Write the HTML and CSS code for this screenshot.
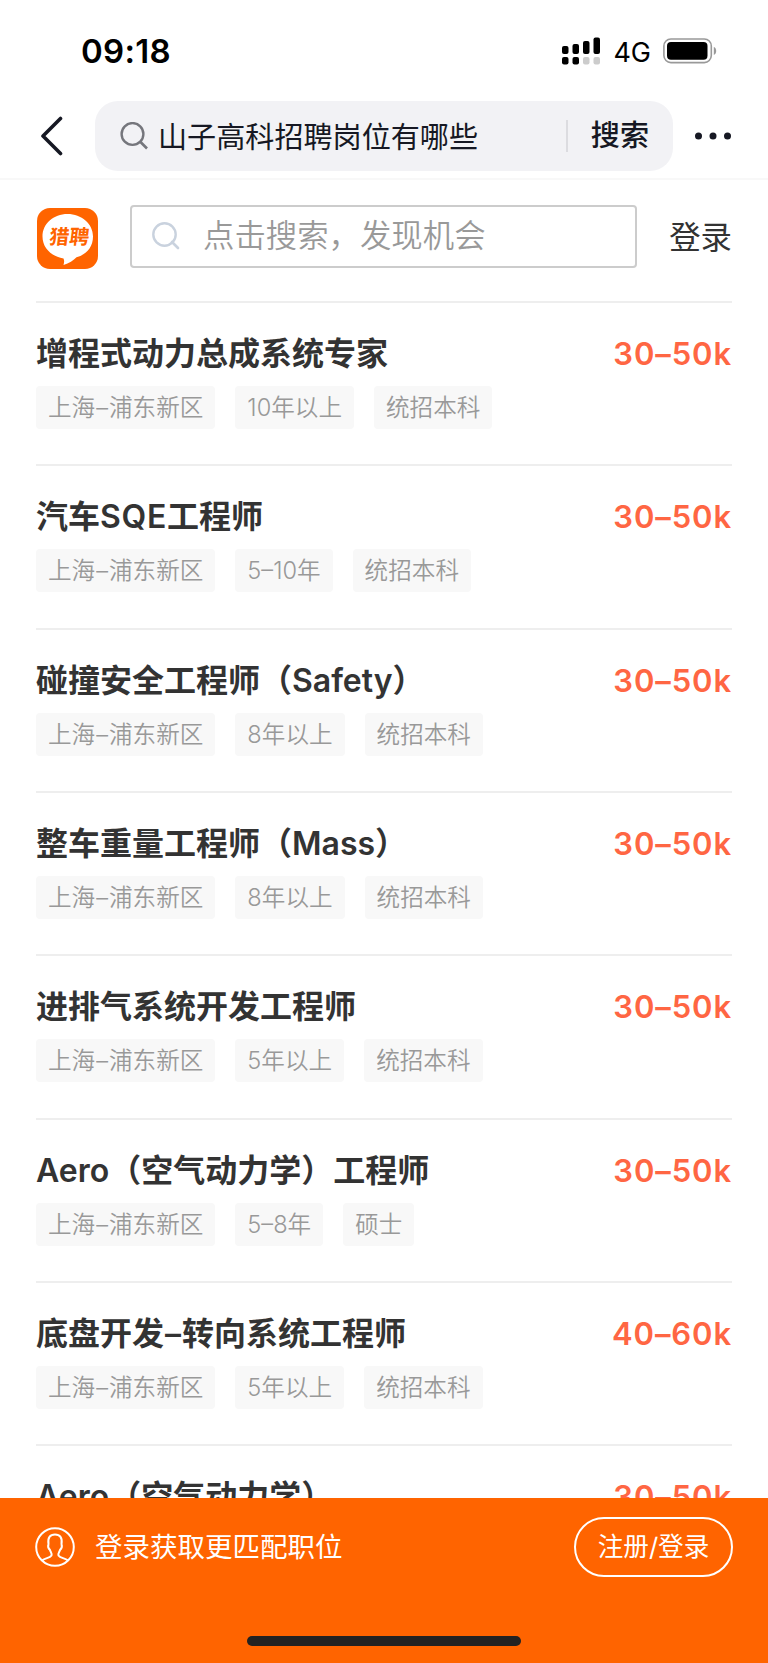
FILE: index.html
```html
<!DOCTYPE html>
<html lang="zh-CN">
<head>
    <meta charset="UTF-8">
    <meta name="viewport" content="width=device-width, initial-scale=1.0">
    <title>猎聘</title>
    <link rel="stylesheet" href="styles.css">
</head>
<body>
    <div class="status-bar">
        <span class="time">09:18</span>
        <div class="status-icons">
            <svg class="signal" width="39" height="28" viewBox="0 0 39 28">
                <rect x="0" y="9" width="6.5" height="8" rx="2"/>
                <rect x="10.5" y="7" width="6.5" height="10" rx="2"/>
                <rect x="21" y="4" width="6.5" height="13" rx="2"/>
                <rect x="31.5" y="0.5" width="6.5" height="16.5" rx="2"/>
                <rect x="0" y="20" width="6.5" height="7.5" rx="2"/>
                <rect x="10.5" y="20" width="6.5" height="7.5" rx="2"/>
                <rect x="21" y="20" width="6.5" height="7.5" rx="2" fill="#ccc"/>
                <rect x="31.5" y="20" width="6.5" height="7.5" rx="2" fill="#ccc"/>
            </svg>
            <span class="network">4G</span>
            <svg class="battery" width="55" height="26" viewBox="0 0 55 26">
                <rect x="0.9" y="1" width="47.4" height="23.6" rx="7" fill="none" stroke="#999" stroke-width="1.6"/>
                <rect x="4" y="4" width="40.5" height="17.8" rx="4"/>
                <path d="M50.8 9c3.2 1 3.2 6.8 0 8z" fill="#999"/>
            </svg>
        </div>
    </div>

    <nav class="nav-bar">
        <svg class="back" width="24" height="40" viewBox="0 0 24 40">
            <path d="M20.5 2.5L3 20L20.5 37.5" fill="none" stroke="#161823" stroke-width="3.6" stroke-linecap="round" stroke-linejoin="round"/>
        </svg>
        <div class="nav-search">
            <svg class="nav-search-icon" width="28" height="28" viewBox="0 0 28 28">
                <circle cx="12.5" cy="12" r="10.9" fill="none" stroke="#75767c" stroke-width="2.4"/>
                <path d="M20 19.5L27 26.5" stroke="#75767c" stroke-width="2.6"/>
            </svg>
            <span class="nav-keyword">山子高科招聘岗位有哪些</span>
            <span class="nav-submit">搜索</span>
        </div>
        <svg class="more" width="38" height="8" viewBox="0 0 38 8">
            <circle cx="4.5" cy="4" r="3.5"/>
            <circle cx="19" cy="4" r="3.5"/>
            <circle cx="33.5" cy="4" r="3.5"/>
        </svg>
    </nav>

    <header class="site-header">
        <svg class="logo" width="61" height="61" viewBox="0 0 61 61">
            <rect width="61" height="61" rx="13" fill="#ff6400"/>
            <path d="M30.5 6C16.500 6 5.500 15.700 5.500 28.500C5.500 40.500 15 48.500 26.500 50.500C27.500 52.500 27.200 54.700 26.500 57C32 55.500 36.500 52.200 39.500 49.300C49.500 46.500 56 39 56 28.500C56 15.700 44.500 6 30.500 6Z" fill="#fff"/>
            <text class="logo-text" x="11" y="36" transform="translate(5 0) skewX(-7)">猎聘</text>
        </svg>
        <div class="search-box">
            <svg width="28" height="28" viewBox="0 0 28 28">
                <circle cx="12.5" cy="12.5" r="11.2" fill="none" stroke="#c9d2de" stroke-width="2.4"/>
                <path d="M20 20L26 26" stroke="#c9d2de" stroke-width="2.6" stroke-linecap="round"/>
            </svg>
            <span class="placeholder">点击搜索，发现机会</span>
        </div>
        <a class="login">登录</a>
    </header>

    <main class="job-list">
        <section class="job">
            <div class="job-head">
                <h3>增程式动力总成系统专家</h3>
                <span class="salary">30–50k</span>
            </div>
            <div class="tags"><span>上海<i>–</i>浦东新区</span><span>10年以上</span><span>统招本科</span></div>
        </section>
        <section class="job">
            <div class="job-head">
                <h3>汽车<b>SQE</b>工程师</h3>
                <span class="salary">30–50k</span>
            </div>
            <div class="tags"><span>上海<i>–</i>浦东新区</span><span>5–10年</span><span>统招本科</span></div>
        </section>
        <section class="job">
            <div class="job-head">
                <h3>碰撞安全工程师（Safety）</h3>
                <span class="salary">30–50k</span>
            </div>
            <div class="tags"><span>上海<i>–</i>浦东新区</span><span>8年以上</span><span>统招本科</span></div>
        </section>
        <section class="job">
            <div class="job-head">
                <h3>整车重量工程师（Mass）</h3>
                <span class="salary">30–50k</span>
            </div>
            <div class="tags"><span>上海<i>–</i>浦东新区</span><span>8年以上</span><span>统招本科</span></div>
        </section>
        <section class="job">
            <div class="job-head">
                <h3>进排气系统开发工程师</h3>
                <span class="salary">30–50k</span>
            </div>
            <div class="tags"><span>上海<i>–</i>浦东新区</span><span>5年以上</span><span>统招本科</span></div>
        </section>
        <section class="job">
            <div class="job-head">
                <h3>Aero（空气动力学）工程师</h3>
                <span class="salary">30–50k</span>
            </div>
            <div class="tags"><span>上海<i>–</i>浦东新区</span><span>5–8年</span><span>硕士</span></div>
        </section>
        <section class="job">
            <div class="job-head">
                <h3>底盘开发<i>–</i>转向系统工程师</h3>
                <span class="salary">40–60k</span>
            </div>
            <div class="tags"><span>上海<i>–</i>浦东新区</span><span>5年以上</span><span>统招本科</span></div>
        </section>
        <section class="job">
            <div class="job-head">
                <h3>Aero（空气动力学）</h3>
                <span class="salary">30–50k</span>
            </div>
        </section>
    </main>

    <footer class="login-bar">
        <div class="login-row">
            <svg class="avatar" width="40" height="40" viewBox="0 0 40 40" fill="none" stroke="#fff" stroke-width="2">
                <circle cx="20" cy="20" r="18.8"/>
                <path d="M7 33.500C9 31.500 15 31 16.500 28.500C17.300 26.500 15.500 25 15 23C13.500 21.500 12.700 19 13.500 17C12.500 10.500 15 7.500 20 7.500C25 7.500 27.500 10.500 26.500 17C27.300 19 26.500 21.500 25 23C24.500 25 22.700 26.500 23.500 28.500C25 31 31 31.500 33 33.500"/>
            </svg>
            <span class="login-tip">登录获取更匹配职位</span>
            <a class="login-button">注册/登录</a>
        </div>
        <div class="home-indicator"></div>
    </footer>
</body>
</html>
```
FILE: styles.css
```css
* {
    box-sizing: border-box;
}

body {
    margin: 0;
    height: 1663px;
    overflow: hidden;
    background-color: #fff;
    font-family: Inter, "Noto Sans CJK SC", sans-serif;
    color: #333;
}

svg {
    display: block;
    flex: none;
}

/* 状态栏 */
.status-bar {
    display: flex;
    justify-content: space-between;
    height: 101px;
    padding: 31px 50px 0 81px;
    color: #000;
}

.time {
    font-size: 33px;
    line-height: 40px;
    font-weight: 600;
    letter-spacing: 0.3px;
}

.status-icons {
    display: flex;
    align-items: center;
    height: 40px;
}

.network {
    margin: 2px 12px 0 12px;
    font-size: 27px;
}

/* 顶部导航 */
.nav-bar {
    display: flex;
    align-items: center;
    height: 79px;
    padding: 0 36px 7px 40px;
    border-bottom: 2px solid #f8f8f8;
    color: #161823;
}

.nav-search {
    display: flex;
    align-items: center;
    width: 578px;
    height: 70px;
    margin: 0 21px 0 31px;
    padding: 0 24px 0 25px;
    border-radius: 23px;
    background-color: #f2f2f5;
    font-size: 29.1px;
    white-space: nowrap;
}

.nav-keyword {
    flex: 1;
    margin: -2px 0 0 10px;
}

.nav-submit {
    padding-left: 23px;
    border-left: 2px solid #dcdce0;
    line-height: 32px;
    font-weight: 500;
}

.more {
    fill: #161823;
}

/* 站点头部 */
.site-header {
    display: flex;
    align-items: center;
    height: 121px;
    padding: 0 36px 9px 37px;
}

.logo {
    margin-top: 4px;
}

.logo-text {
    font-size: 20px;
    font-weight: 700;
    fill: #ff6400;
}

.search-box {
    display: flex;
    align-items: center;
    width: 508px;
    height: 63px;
    margin: 0 32px;
    padding-left: 20px;
    border: 2px solid #ccc;
    border-radius: 4px;
    font-size: 31.4px;
    font-weight: 350;
    color: #999;
}

.placeholder {
    margin-left: 23px;
    line-height: 40px;
}

.login {
    margin-top: -2px;
    font-size: 31.4px;
    white-space: nowrap;
}

/* 职位列表 */
.job-list {
    padding: 0 36px;
}

.job {
    height: 163.33px;
    padding-top: 30px;
    border-top: 2px solid #eee;
}

.job-head {
    display: flex;
    justify-content: space-between;
    height: 53px;
    line-height: 42px;
}

h3 {
    margin: 0;
    font-size: 32px;
    font-weight: 600;
}

h3 b {
    font-weight: 600;
    letter-spacing: 0.7px;
}

i {
    padding: 0 1px;
    font-style: normal;
}

.salary {
    font-size: 31px;
    font-weight: 600;
    letter-spacing: 0.9px;
    color: #ff6643;
}

.tags {
    display: flex;
    gap: 20px;
}

.tags span {
    height: 43px;
    padding: 0 12px;
    border-radius: 4px;
    background-color: #f8f8f8;
    font-size: 23.6px;
    font-weight: 350;
    line-height: 43px;
    color: #999;
}

/* 底部登录条 */
.login-bar {
    position: fixed;
    left: 0;
    right: 0;
    bottom: 0;
    height: 165px;
    padding: 19px 35px 0;
    background-color: #ff6400;
    color: #fff;
}

.login-row {
    display: flex;
    align-items: center;
    height: 60px;
}

.login-tip {
    flex: 1;
    margin: -4px 0 0 20px;
    font-size: 27.5px;
}

.login-button {
    width: 159px;
    height: 60px;
    border: 2px solid #fff;
    border-radius: 30px;
    font-size: 25.6px;
    line-height: 55px;
    text-align: center;
}

.home-indicator {
    width: 274px;
    height: 10px;
    margin: 59px auto 0;
    border-radius: 5px;
    background-color: #222;
}
```
